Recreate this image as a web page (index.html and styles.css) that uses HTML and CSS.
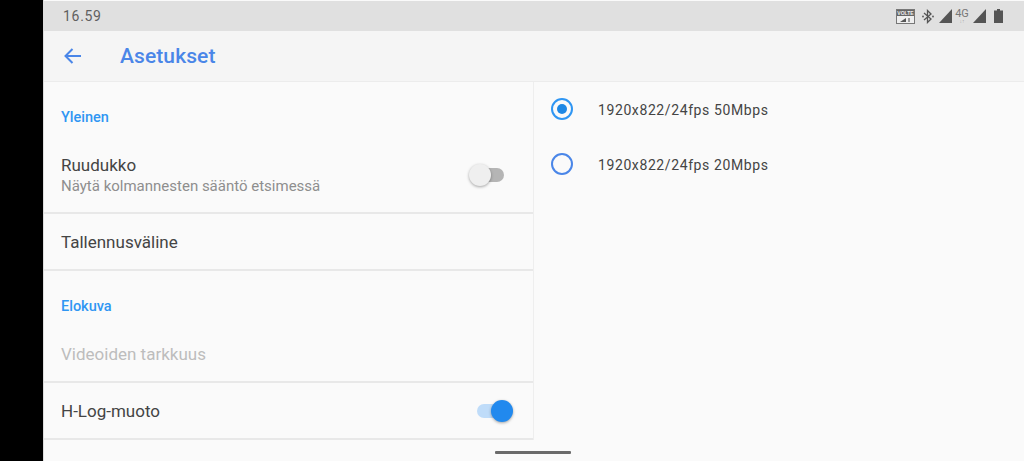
FILE: index.html
```html
<!DOCTYPE html>
<html lang="fi">
<head>
<meta charset="utf-8">
<title>Asetukset</title>
<link rel="stylesheet" href="styles.css">
</head>
<body>
<div class="bezel"></div>
<div class="phone">
  <header class="status">
    <span class="time">16.59</span>
    <div class="status-icons">
      <svg class="ic-volte" width="19" height="15" viewBox="0 0 19 15"><rect x="0.5" y="0.5" width="18" height="14" fill="#eee" stroke="#777"/><rect x="1" y="1" width="17" height="6" fill="#666"/><text x="9.500" y="6" class="volte-text" text-anchor="middle">VOLTE</text><path d="M4 13l6-4v4z" fill="#555"/><rect x="12" y="9" width="2" height="4" fill="#999"/></svg>
      <svg class="ic-bt" width="12" height="15" viewBox="0 0 12 15"><path d="M2 4l7 6-3.500 3.500V1.500L9 5l-7 6" fill="none" stroke="#555" stroke-width="1.300"/><circle cx="1" cy="7.500" r=".9" fill="#555"/><circle cx="11" cy="7.500" r=".9" fill="#555"/></svg>
      <svg class="ic-signal" width="13" height="14" viewBox="0 0 13 14"><path d="M13 0v14H0z" fill="#555"/></svg>
      <div class="net"><span class="net-main">4G</span><span class="net-sub">↓↑</span></div>
      <svg class="ic-signal" width="13" height="14" viewBox="0 0 13 14"><path d="M13 0v14H0z" fill="#555"/></svg>
      <svg class="ic-battery" width="9" height="14" viewBox="0 0 9 14"><path d="M3 0h3v1.500H9V14H0V1.500h3z" fill="#555"/></svg>
    </div>
  </header>
  <div class="appbar">
    <svg class="back" width="20" height="18" viewBox="0 0 20 18"><path d="M18 9H2.500M9.500 2L2.500 9l7 7" fill="none" stroke="#4a86e8" stroke-width="2"/></svg>
    <h1 class="title">Asetukset</h1>
  </div>
  <main class="content">
    <section class="settings">
      <div class="section-head first">Yleinen</div>
      <div class="row tall divided">
        <div>
          <div class="row-title">Ruudukko</div>
          <div class="row-sub">Näytä kolmannesten sääntö etsimessä</div>
        </div>
        <div class="switch off"><span class="track"></span><span class="knob"></span></div>
      </div>
      <div class="row divided"><div class="row-title">Tallennusväline</div></div>
      <div class="section-head second">Elokuva</div>
      <div class="row divided disabled"><div class="row-title">Videoiden tarkkuus</div></div>
      <div class="row divided">
        <div class="row-title">H-Log-muoto</div>
        <div class="switch on"><span class="track"></span><span class="knob"></span></div>
      </div>
    </section>
    <section class="options">
      <div class="option"><span class="radio checked"></span><span class="option-label">1920x822/24fps 50Mbps</span></div>
      <div class="option"><span class="radio"></span><span class="option-label">1920x822/24fps 20Mbps</span></div>
    </section>
  </main>
  <div class="home-bar"></div>
</div>
</body>
</html>
```
FILE: styles.css
```css
* { box-sizing: border-box; }
html, body { margin: 0; height: 100%; }
body {
  display: flex;
  width: 1024px;
  height: 461px;
  overflow: hidden;
  background: #fafafa;
  font-family: Roboto, "Liberation Sans", sans-serif;
}
.bezel { width: 43px; flex: none; background: #000; }
.phone {
  position: relative;
  flex: 1;
  display: flex;
  flex-direction: column;
  border-left: 1px solid #ddd;
  min-width: 0;
}
.status {
  height: 30px;
  margin-top: 1px;
  flex: none;
  padding: 0 21px 0 19px;
  display: flex;
  align-items: center;
  justify-content: space-between;
  background: #e0e0e0;
  color: #5f5f5f;
}
.time { font-size: 14px; letter-spacing: 0.7px; }
.status-icons { display: flex; align-items: center; }
.volte-text { font: 700 5px "Liberation Sans", sans-serif; fill: #eee; }
.ic-bt { margin-left: 7px; }
.ic-signal { margin-left: 5px; }
.ic-battery { margin-left: 8px; }
.net { display: flex; flex-direction: column; align-items: center; width: 12px; margin-left: 4px; line-height: 1; color: #777; }
.net-main { font-size: 11px; }
.net-sub { font-size: 5px; color: #aaa; }
.net + .ic-signal { margin-left: 5px; }
.appbar {
  height: 51px;
  flex: none;
  display: flex;
  align-items: center;
  padding-left: 19px;
  background: #f5f5f5;
  border-bottom: 1px solid #ececec;
}
.back { margin-right: 37px; margin-top: -1px; }
.title { margin: 0; font-size: 21px; font-weight: 500; line-height: 1; color: #4a86e8; letter-spacing: 0.1px; }
.content { flex: 1; display: flex; min-height: 0; }
.settings { width: 490px; flex: none; border-right: 1px solid #eee; height: 358px; }
.section-head { font-size: 14.5px; font-weight: 500; color: #2f96f3; padding-left: 17px; line-height: 16px; }
.section-head.first { padding-top: 28px; height: 55px; }
.section-head.second { padding-top: 28px; height: 55px; }
.row {
  height: 57px;
  padding: 0 20px 0 17px;
  display: flex;
  align-items: center;
  justify-content: space-between;
}
.row.tall { height: 77px; padding-top: 3px; }
.row.divided { border-bottom: 2px solid #e8e8e8; }
.row-title { font-size: 17px; line-height: 20px; color: #444; }
.row-sub { font-size: 15px; line-height: 22px; color: #8e8e8e; }
.disabled .row-title { color: #bdbdbd; }
.switch { position: relative; width: 36px; height: 24px; flex: none; }
.track { position: absolute; left: 3px; right: 1px; top: 5px; height: 14px; border-radius: 7px; }
.knob { position: absolute; top: 1px; width: 22px; height: 22px; border-radius: 50%; box-shadow: 0 1px 3px rgba(0,0,0,.35); }
.switch.off { margin-right: 8px; margin-top: -3px; }
.off .track { background: #b5b5b5; }
.off .knob { left: 0; background: #efefef; }
.on .track { background: #bfdcf9; right: 8px; left: 0; }
.on .knob { right: 0; background: #2189ee; }
.options { flex: 1; }
.option { height: 56px; display: flex; align-items: center; padding-left: 17px; }
.option:first-child { height: 54px; }
.radio {
  width: 22px; height: 22px;
  border: 2px solid #4a86e8;
  border-radius: 50%;
  flex: none;
  margin-right: 25px;
  display: flex; align-items: center; justify-content: center;
}
.radio.checked { border-color: #2f96f3; }
.radio.checked::after { content: ""; width: 10px; height: 10px; border-radius: 50%; background: #1e88e5; }
.option-label { font-size: 14px; line-height: 18px; padding-top: 2px; color: #444; letter-spacing: 0.6px; }
.home-bar {
  position: absolute;
  left: 451px; bottom: 7px;
  width: 76px; height: 3px;
  background: #6b6b6b;
  border-radius: 1px;
}
```
